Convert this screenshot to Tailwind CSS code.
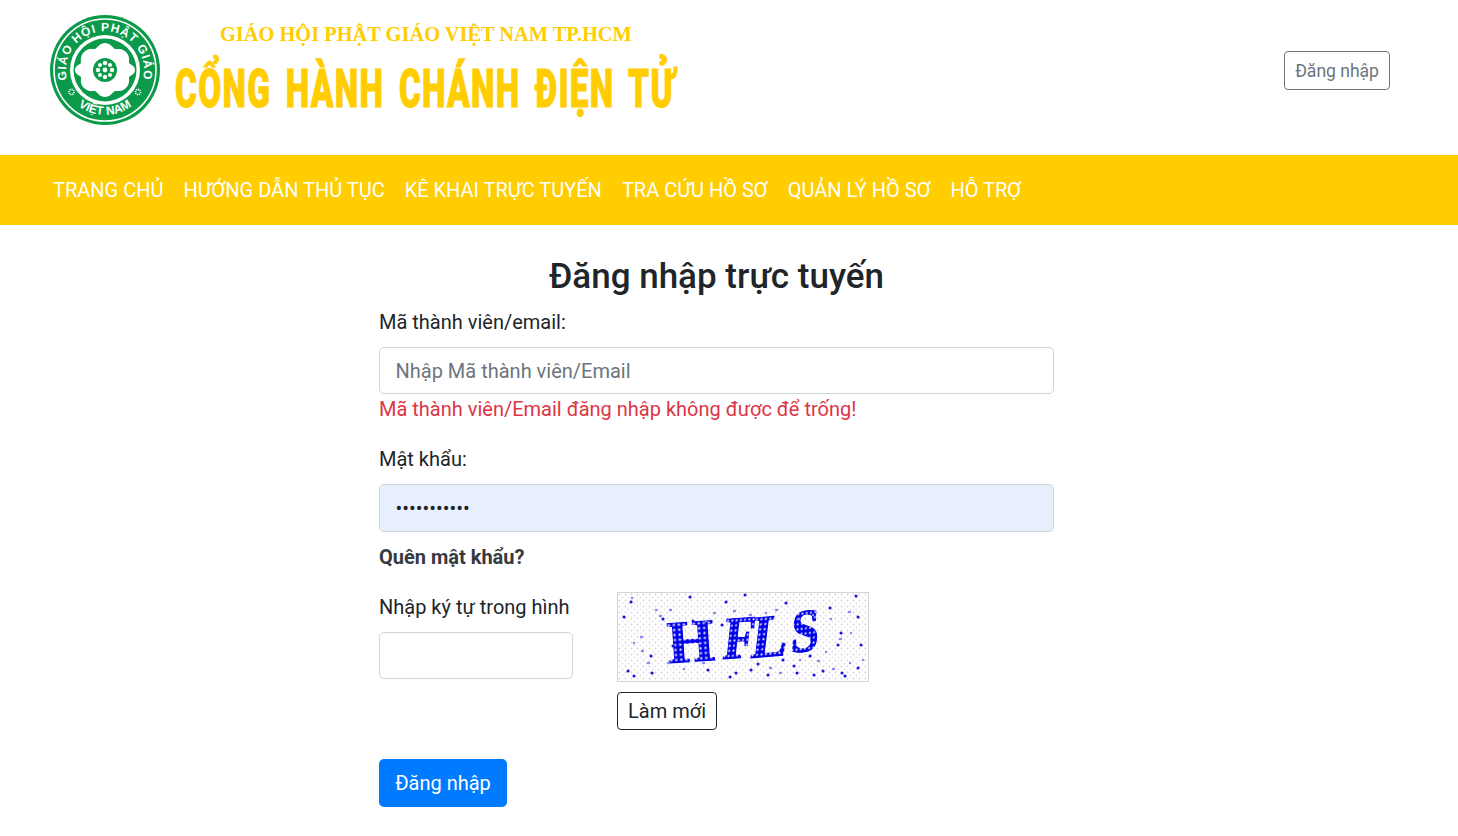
<!DOCTYPE html>
<html lang="vi">
<head>
  <meta charset="UTF-8">
  <title>Đăng nhập - Cổng hành chánh điện tử</title>
  <script src="https://cdn.jsdelivr.net/npm/@tailwindcss/browser@4"></script>
</head>
<body class="bg-white font-['Roboto',sans-serif] text-[20px] leading-[30px] text-[#212529] overflow-hidden">
  <!-- Header -->
  <header class="h-[155px] pl-[49px] pr-[68px] pt-[14px] flex items-start justify-between">
    <div class="flex items-start gap-[14px]">
      <svg class="w-[112px] h-[112px] shrink-0" viewBox="0 0 112 112">
        <circle cx="56" cy="56" r="55" fill="#0a9a4a"/>
        <circle cx="56" cy="56" r="51" fill="none" stroke="#fff" stroke-width="1.6"/>
        <circle cx="56" cy="56" r="35" fill="#fff"/>
        <circle cx="56" cy="56" r="31.5" fill="#0a9a4a"/>
        <path fill="#fff" d="M56 29c5 0 7 4 10 6 3 0 7-1 11 3s3 8 3 11c2 2 6 3 6 7s-4 5-6 7c0 3 1 7-3 11s-8 3-11 3c-3 2-5 6-10 6s-7-4-10-6c-3 0-7 1-11-3s-3-8-3-11c-2-2-6-3-6-7s4-5 6-7c0-3-1-7 3-11s8-3 11-3c3-2 5-6 10-6z"/>
        <circle cx="56" cy="56" r="12" fill="#0a9a4a"/>
        <g fill="#fff">
          <circle cx="56" cy="56" r="2.4"/><circle cx="56" cy="49" r="2.2"/><circle cx="56" cy="63" r="2.2"/><circle cx="49" cy="56" r="2.2"/><circle cx="63" cy="56" r="2.2"/><circle cx="51" cy="51" r="2"/><circle cx="61" cy="51" r="2"/><circle cx="51" cy="61" r="2"/><circle cx="61" cy="61" r="2"/>
        </g>
        <defs>
          <path id="logoTop" d="M18.5 67a39 39 0 1 1 75 0"/>
          <path id="logoBottom" d="M18 80A45 45 0 0 0 94 80"/>
        </defs>
        <text font-family="'Liberation Sans',sans-serif" font-weight="700" font-size="12" fill="#fff" letter-spacing=".9"><textPath href="#logoTop" startOffset="50%" text-anchor="middle">GIÁO HỘI PHẬT GIÁO</textPath></text>
        <text font-family="'Liberation Sans',sans-serif" font-weight="700" font-size="12" fill="#fff"><textPath href="#logoBottom" startOffset="50%" text-anchor="middle">VIỆT NAM</textPath></text>
        <circle cx="22.5" cy="78" r="2.6" fill="none" stroke="#fff" stroke-width="1.6" stroke-dasharray="1.2 .8"/>
        <circle cx="89" cy="78" r="2.6" fill="none" stroke="#fff" stroke-width="1.6" stroke-dasharray="1.2 .8"/>
      </svg>
      <div class="flex flex-col">
        <span class="ml-[45px] mt-[7px] font-['Liberation_Serif',serif] font-bold text-[20.4px] leading-[26px] text-[#ffcd00] whitespace-nowrap">GIÁO HỘI PHẬT GIÁO VIỆT NAM TP.HCM</span>
        <span class="mt-[11px] font-['Roboto',sans-serif] font-black text-[53px] leading-[62px] tracking-[2px] [word-spacing:8px] text-[#ffcd00] [-webkit-text-stroke:1px_#ffcd00] whitespace-nowrap origin-left scale-x-[0.63]">CỔNG HÀNH CHÁNH ĐIỆN TỬ</span>
      </div>
    </div>
    <button class="h-[39px] w-[106px] mt-[37px] border border-[#6c757d] rounded-[4px] text-[17.5px] text-[#6c757d]">Đăng nhập</button>
  </header>

  <!-- Nav -->
  <nav class="h-[70px] bg-[#ffcd00] pl-[53px] flex items-center gap-[20px] text-white whitespace-nowrap">
    <a href="#">TRANG CHỦ</a>
    <a href="#">HƯỚNG DẪN THỦ TỤC</a>
    <a href="#">KÊ KHAI TRỰC TUYẾN</a>
    <a href="#">TRA CỨU HỒ SƠ</a>
    <a href="#">QUẢN LÝ HỒ SƠ</a>
    <a href="#">HỖ TRỢ</a>
  </nav>

  <!-- Form -->
  <main class="ml-[379px] w-[675px] pt-[29px]">
    <h1 class="text-center text-[35px] leading-[46px] font-medium">Đăng nhập trực tuyến</h1>
    <form class="mt-[7px]">
      <label class="block leading-[30px]">Mã thành viên/email:</label>
      <input type="text" placeholder="Nhập Mã thành viên/Email" class="block mt-[10px] w-full h-[47px] px-[15.5px] border border-[#ced4da] rounded-[5px] placeholder:text-[#6c757d]">
      <p class="text-[#dc3545] mt-0">Mã thành viên/Email đăng nhập không được để trống!</p>

      <label class="block mt-[20px]">Mật khẩu:</label>
      <input type="password" value="12345678901" class="block mt-[10px] w-full h-[48px] px-[15.5px] border border-[#ced4da] rounded-[5px] bg-[#e8f0fe]">
      <a href="#" class="block mt-[10px] font-bold text-[#343a40]">Quên mật khẩu?</a>

      <div class="flex mt-[20px]">
        <div class="w-[238px]">
          <label class="block mt-0 leading-[30px]">Nhập ký tự trong hình</label>
          <input type="text" class="block mt-[10px] w-[194px] h-[47px] border border-[#ced4da] rounded-[5px]">
        </div>
        <div>
          <svg class="block w-[252px] h-[90px] border border-[#d4d4d4]" viewBox="0 0 250 88">
            <defs>
              <pattern id="grain" width="6" height="6" patternUnits="userSpaceOnUse">
                <rect width="6" height="6" fill="#fff"/>
                <circle cx="1.5" cy="1.5" r=".9" fill="#d8d4dc"/>
                <circle cx="4.5" cy="4.5" r=".9" fill="#e8e0ec"/>
              </pattern>
              <pattern id="dots" width="5" height="5" patternUnits="userSpaceOnUse">
                <rect width="5" height="5" fill="#0000e6"/>
                <circle cx="2.5" cy="2.5" r="1.2" fill="#d8d8ff"/>
              </pattern>
            </defs>
            <rect width="250" height="88" fill="url(#grain)"/>
            <g font-family="'Liberation Serif',serif" font-weight="700" fill="url(#dots)" stroke="url(#dots)" stroke-width="1.2" font-size="60">
              <text transform="translate(51 70) rotate(-4)">H</text>
              <text transform="translate(104 66) rotate(-4) skewX(-10) scale(.85 1)">F</text>
              <text transform="translate(132 65) rotate(-5) skewX(-12) scale(.9 1)">L</text>
              <text transform="translate(172 60) rotate(-7) skewX(-10) scale(.85 1)">S</text>
            </g>
            <path fill="none" stroke="#1414e0" stroke-width="3" stroke-linecap="round" d="M6 24h.1M13 9h.1M72 4h.1M108 9h.1M127 2h.1M168 10h.1M212 15h.1M238 3h.1M240 24h.1M223 40h.1M243 52h.1M10 78h.1M16 83h.1M33 63h.1M34 80h.1M55 53h.1M45 26h.1M75 28h.1M104 32h.1M140 71h.1M150 82h.1M176 73h.1M179 80h.1M192 63h.1M196 82h.1M224 80h.1M227 83h.1M240 75h.1M220 52h.1M133 77h.1M112 84h.1M90 77h.1M118 80h.1M165 67h.1M205 78h.1"/>
            <path fill="none" stroke="#8a8af4" stroke-width="2.4" stroke-linecap="round" d="M14 5h.1M38 17h.5M42 23h1M52 17h1M88 28h.1M96 20h1M116 18h1M123 27h.1M132 22h1M148 20h.1M158 17h1M180 26h1M195 22h.1M213 26h.1M231 19h1M222 46h1M233 40h.1M16 50h.1M23 44h1M30 70h1M24 58h1M50 70h1M66 76h.1M85 70h1M152 75h1M162 80h1M182 67h.1M200 68h1M208 59h.1M215 76h1M232 70h.1M245 67h.1"/>
          </svg>
          <button type="button" class="block mt-[10px] w-[100px] h-[38px] border border-[#212529] rounded-[4px] text-[#212529]">Làm mới</button>
        </div>
      </div>

      <button type="button" class="block mt-[29px] w-[128px] h-[48px] bg-[#007bff] text-white rounded-[5px]">Đăng nhập</button>
    </form>
  </main>
</body>
</html>
